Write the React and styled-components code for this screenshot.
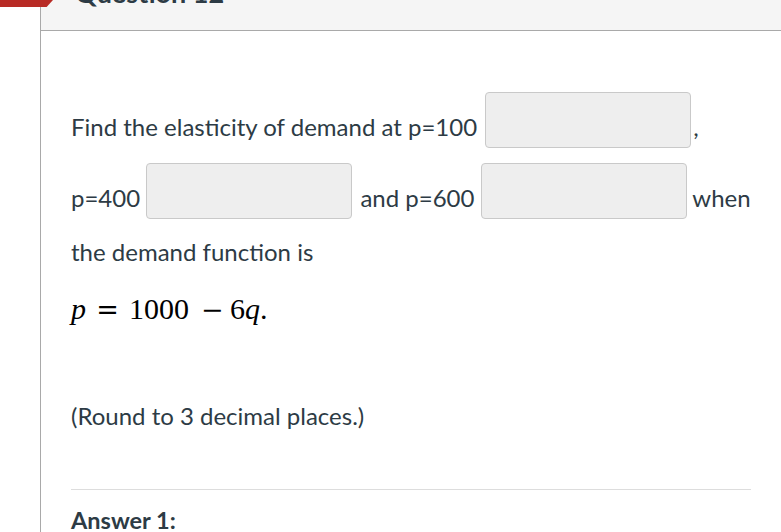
import React from 'react'
import styled, { createGlobalStyle } from 'styled-components'

const GlobalStyle = createGlobalStyle`
  body {
    margin: 0;
    background: #fff;
    font-family: Lato, "Open Sans", sans-serif;
    color: #2d3b45;
    overflow: hidden;
  }
`

const Page = styled.div`
  position: relative;
  display: flex;
  width: 781px;
  height: 532px;
  overflow: hidden;
`

const Gutter = styled.div`
  width: 40px;
  flex-shrink: 0;
`

// the question flag, scrolled mostly out of view
const Flag = styled.div`
  position: absolute;
  top: 0;
  left: 0;
  width: 53px;
  height: 7px;
  background: #b82b25;
  clip-path: polygon(0 0, 100% 0, 88% 100%, 0 100%);
`

const Question = styled.section`
  flex: 1;
  min-width: 0;
  border-left: 1px solid #a9a9a9;
`

const Header = styled.header`
  box-sizing: border-box;
  height: 67px;
  margin-top: -36px;
  padding: 13px 34px 0;
  background: #f5f5f5;
  border-bottom: 1px solid #a9a9a9;
`

const Title = styled.h2`
  margin: 0;
  font-size: 27px;
  line-height: 1.2;
  font-weight: 700;
  color: #2d3b45;
`

const Body = styled.div`
  padding: 61px 30px 0;
`

const Prompt = styled.p`
  margin: 0;
  font-size: 24px;
  line-height: 1.5;
  white-space: nowrap;
`

const Blank = styled.input`
  box-sizing: border-box;
  width: 206px;
  height: 56px;
  margin: 0 ${p => p.$right ?? 2}px 15px ${p => p.$left ?? 2}px;
  padding: 0 8px;
  border: 1px solid #c9c9c9;
  border-radius: 4px;
  background: #eeeeee;
  font: inherit;
  vertical-align: 6px;
  outline: none;
`

const MathLine = styled.div`
  margin-top: 19px;
  font-family: "Liberation Serif", "Times New Roman", serif;
  font-size: 30px;
  line-height: 40px;
  color: #000;
  white-space: nowrap;
`

const Var = styled.i`
  font-style: italic;
`

const Op = styled.span`
  display: inline-block;
  width: ${p => p.$w}px;
  margin: 0 ${p => p.$right}px 0 ${p => p.$left}px;
  font-family: "DejaVu Serif", serif;
  font-size: 27px;
  text-align: center;
`

const Note = styled.p`
  margin: 68px 0 0;
  font-size: 24px;
  line-height: 1.5;
`

const Rule = styled.hr`
  margin: 55px 0 0;
  border: 0;
  border-top: 1px solid #dddddd;
`

const AnswerLabel = styled.h3`
  margin: 13px 0 0;
  font-size: 23.5px;
  line-height: 1.5;
  font-weight: 700;
`

export default function App() {
  return (
    <>
      <GlobalStyle />
      <Page>
        <Flag />
        <Gutter />
        <Question>
          <Header>
            <Title>Question 12</Title>
          </Header>
          <Body>
            <Prompt>
              Find the elasticity of demand at p=100 <Blank aria-label="p=100" />,
              <br />
              p=400 <Blank aria-label="p=400" $left={0} /> and p=600{' '}
              <Blank aria-label="p=600" $left={0} $right={0} /> when
              <br />
              the demand function is
            </Prompt>
            <MathLine>
              <Var>p</Var>
              <Op $w={23} $left={10} $right={10}>=</Op>
              1000
              <Op $w={19} $left={12} $right={10}>−</Op>
              6<Var>q</Var>.
            </MathLine>
            <Note>(Round to 3 decimal places.)</Note>
            <Rule />
            <AnswerLabel>Answer 1:</AnswerLabel>
          </Body>
        </Question>
      </Page>
    </>
  )
}
